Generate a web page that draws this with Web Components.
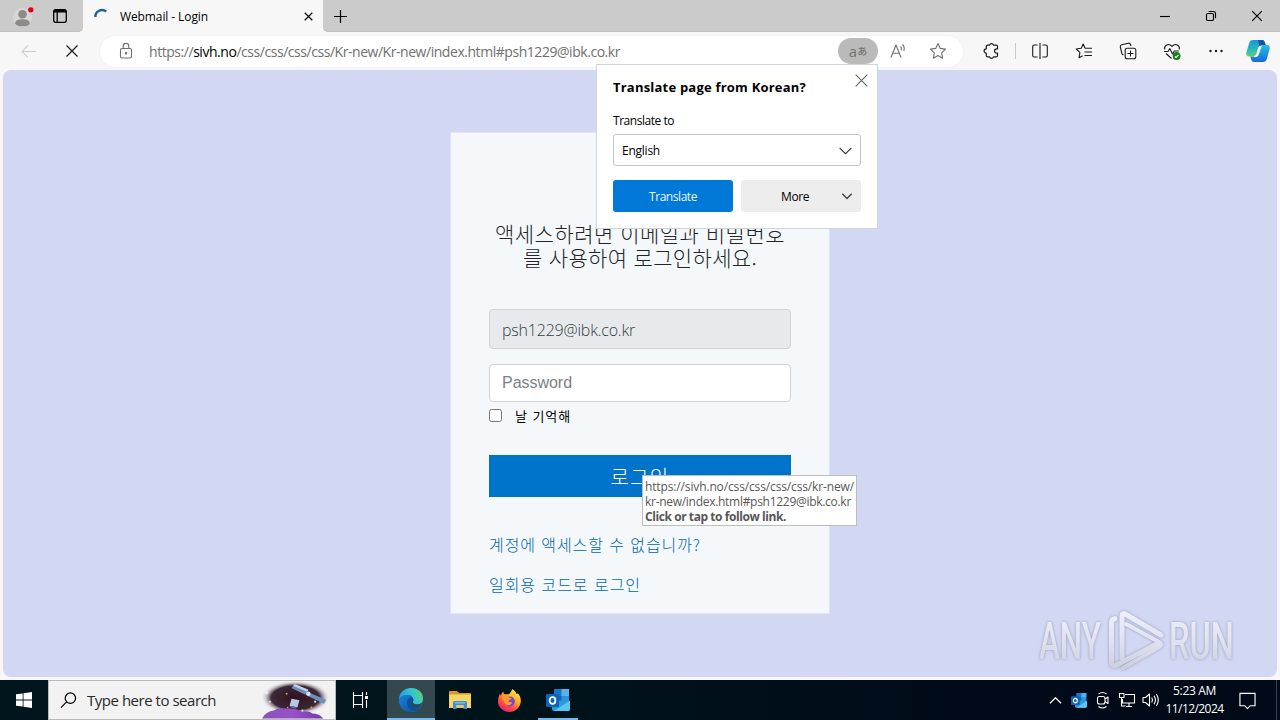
<!DOCTYPE html>
<html lang="ko">
<head>
<meta charset="utf-8">
<title>Webmail - Login</title>
<style>
  html, body { margin: 0; height: 100%; }
  body {
    width: 1280px;
    height: 720px;
    overflow: hidden;
    position: relative;
    display: flex;
    flex-direction: column;
    background: #f7f7f7;
    font-family: "Open Sans", "Noto Sans", "Noto Sans CJK KR", sans-serif;
    font-size: 12px;
    color: #000;
  }
</style>
</head>
<body>
  <tab-strip title-text="Webmail - Login"></tab-strip>
  <tool-bar></tool-bar>
  <page-view>
    <login-card email="psh1229@ibk.co.kr"></login-card>
  </page-view>
  <task-bar></task-bar>
  <translate-popup></translate-popup>
  <link-tip></link-tip>
  <any-mark></any-mark>

<script>
/**
 * Icon set. Every icon is a viewBox plus its markup,
 * strokes use currentColor unless they carry their own fill.
 */
const ICONS = {
  profile: ['0 0 24 24', `<circle cx="12" cy="12" r="12" fill="#d9d7d5" stroke="none"/>
    <circle cx="12" cy="7.800" r="5.400" fill="#8e8a88" stroke="none"/>
    <path d="M2.800 19.500c0-4 3.200-5.300 9.200-5.300s9.200 1.300 9.200 5.300c-1 2.500-4.500 3.700-9.200 3.700s-8.200-1.200-9.200-3.700z" fill="#8e8a88" stroke="none"/>
    <circle cx="22.500" cy="2.300" r="3.400" fill="#e3000f" stroke="none"/>`],
  tabs: ['0 0 16 16', `<rect x="1.700" y="1.700" width="12.600" height="12.600" rx="2"/><path d="M2 3.200h12" stroke-width="2.600"/><path d="M5.200 4v10"/>`],
  spinner: ['0 0 16 16', `<path d="M1.500 8.500A7 7 0 0 1 13 2.800" stroke="#1f6099" stroke-width="2.600"/>`],
  x: ['0 0 16 16', `<path d="M2.500 2.500l11 11M13.500 2.500l-11 11"/>`],
  plus: ['0 0 16 16', `<path d="M8 1v14M1 8h14"/>`],
  min: ['0 0 12 12', `<path d="M1 6.500h10"/>`],
  restore: ['0 0 12 12', `<rect x="1.500" y="3.500" width="7" height="7" rx="1.300"/><path d="M3.700 1.500h4.800a2 2 0 0 1 2 2v4.800"/>`],
  back: ['0 0 18 18', `<path d="M17 9H2M8.500 2.500L2 9l6.500 6.500"/>`],
  lock: ['0 0 16 18', `<rect x="2.500" y="6.500" width="11" height="9.500" rx="1.500"/><path d="M5.200 6.500V4.200a2.800 2.800 0 0 1 5.600 0v2.300"/><circle cx="8" cy="11.300" r=".7" fill="currentColor"/>`],
  read: ['0 0 18 18', `<path d="M2 15.500L7 3l5 12.500M3.800 11.300h6.400M11.500 4.500q1.400 1.500.7 4M13.500 2.500q2.600 2.600 1.300 6.500"/>`],
  star: ['0 0 18 18', `<path d="M9 1.500l2.300 4.900 5.200.7-3.800 3.700.9 5.400L9 13.600l-4.600 2.600.9-5.400L1.500 7.100l5.200-.7z"/>`],
  puzzle: ['0 0 18 18', `<path d="M5.500 3.200h2.100a2 2 0 0 1 3.900 0h2.800a1.200 1.200 0 0 1 1.200 1.200v2.400h-.8a2.200 2.200 0 0 0 0 4.400h.8v2.400a1.200 1.200 0 0 1-1.200 1.200h-2.800a2 2 0 0 1-3.900 0H5.500a1.200 1.200 0 0 1-1.200-1.200v-2.400a2.200 2.200 0 0 1 0-4.400V4.400a1.200 1.200 0 0 1 1.200-1.200z"/>`],
  split: ['0 0 18 18', `<path d="M9 1v16M6.500 3H3.200A1.500 1.500 0 0 0 1.700 4.500v9A1.500 1.500 0 0 0 3.200 15h3.300M11.500 3h3.300a1.500 1.500 0 0 1 1.500 1.500v9a1.500 1.500 0 0 1-1.500 1.500h-3.300"/>`],
  favs: ['0 0 18 18', `<path d="M10 6.300L8.200 2 6.200 6.300 1.200 7l3.700 3.400L4 15.800l3.500-2M10 6.300h7M9.500 10h7.500M9.500 13.500h7.500"/>`],
  collections: ['0 0 18 18', `<rect x="6.200" y="6.200" width="10.600" height="10.600" rx="2"/><path d="M11.500 8.500v6M8.500 11.500h6M4.500 13l-.8-.5a2 2 0 0 1-.9-1.200L1.300 5a2 2 0 0 1 1.400-2.300l6.500-1.500a2 2 0 0 1 2.300 1.300l.5 1.500"/>`],
  health: ['0 0 18 18', `<path d="M1.700 7.500C.8 3.500 5.500.5 9 4.300c3.500-3.800 8.200-.8 7.300 3.200M1 9.500h4l1.800-3 2.700 5.500 1.800-3h4.500M3 11.500l5.500 5"/>
    <circle cx="13.600" cy="14" r="3.900" fill="#177d1c" stroke="none"/><path d="M11.900 14.300l1.200 1.200 2.300-2.600" stroke="#fff"/>`],
  dots: ['0 0 18 18', `<g fill="currentColor" stroke="none"><circle cx="3.500" cy="9" r="1.200"/><circle cx="9" cy="9" r="1.200"/><circle cx="14.500" cy="9" r="1.200"/></g>`],
  copilot: ['0 0 24 24', `<defs>
      <linearGradient id="a" x1="0" y1="0" x2="0" y2="1"><stop offset="0" stop-color="#1797d8"/><stop offset=".55" stop-color="#28b7c0"/><stop offset="1" stop-color="#64cf6f"/></linearGradient>
      <linearGradient id="b" x1="0" y1="0" x2="0" y2="1"><stop offset="0" stop-color="#24bdec"/><stop offset="1" stop-color="#176bd9"/></linearGradient></defs>
    <g stroke="none"><path d="M7 1h9c2 0 2.500 1.500 3 3l.7 2h-3c-2 0-3 1-3.600 3L11 15c-.5 1.600-1.300 2.500-3 2.500H3c-2.500 0-3.200-2-2.500-4.500L3.200 4C3.800 2 5 1 7 1z" fill="url(#a)"/>
    <path d="M12 1h4c2 0 2.500 1.500 3 3l.7 2h-3c-1.500 0-2.500.6-3 1.700z" fill="#1554a5"/>
    <path d="M17 23H8c-2 0-2.500-1.500-3-3l-.7-2.500h3.500c2 0 3-1 3.400-2.600L13 9c.5-1.600 1.300-3 3.200-3H21c2.500 0 3.200 2 2.500 4.500L20.800 20c-.6 2-1.800 3-3.800 3z" fill="url(#b)"/>
    <path d="M13.800 7.500h1.400q-.7.700-1 2l-2 6q-.7 2-2.500 2H8.200q1.800-.3 2.600-2.300l1.700-5.500q.5-1.600 1.300-2.200z" fill="#f7f7f7" stroke="#f7f7f7"/></g>`],
  down: ['0 0 14 14', `<path d="M1.500 4.500L7 10l5.500-5.500"/>`],
  up: ['0 0 14 14', `<path d="M1 10l6-6 6 6"/>`],
  windows: ['0 0 16 16', `<path d="M0 2.300L6.700 1.400v6.200H0zM7.500 1.200L16 0v7.600H7.500zM0 8.400h6.700v6.200L0 13.700zM7.500 8.400H16V16l-8.500-1.200z" fill="#fff" stroke="none"/>`],
  search: ['0 0 18 18', `<circle cx="11" cy="6.500" r="5.500"/><path d="M7 10.500L1 16.500"/>`],
  space: ['0 0 72 38', `<defs><radialGradient id="s"><stop offset="0" stop-color="#30121c"/><stop offset=".7" stop-color="#3b2836"/><stop offset="1" stop-color="#efedef" stop-opacity="0"/></radialGradient>
      <linearGradient id="p" x1="0" x2="1"><stop offset="0" stop-color="#8456b5"/><stop offset=".5" stop-color="#9a50c8"/><stop offset="1" stop-color="#713aae"/></linearGradient></defs>
    <g stroke="none"><ellipse cx="37" cy="17" rx="35" ry="17.500" fill="url(#s)"/>
    <path d="M36 3l14 6-3 5-14-7zM51 12l17 7-2 4-17-8z" fill="#6f8fbb"/><path d="M36 3l14 6-1 2-14-6z" fill="#c3d4ea"/>
    <circle cx="50" cy="13" r="2.300" fill="#d5e2f3"/><path d="M33 18l8 1.500-2 7-8-1.500z" fill="#b7c9e6"/><path d="M31 25l8 1.500-2 1.500-5-1z" fill="#5f78a5"/>
    <path d="M3 38q4-7 12-8 4-3 11-2 12-1 17 3 8-1 11 2 7 0 11 5z" fill="url(#p)"/>
    <g fill="#f6ede7"><circle cx="8" cy="12" r="1.500"/><circle cx="11" cy="21" r="1"/><circle cx="57" cy="21" r="1.100"/><circle cx="44" cy="30" r="1"/></g>
    <g fill="#dc9e42"><circle cx="28" cy="13" r="1"/><circle cx="53" cy="27" r="1.100"/><circle cx="29" cy="27" r=".8"/></g></g>`],
  taskview: ['0 0 18 18', `<path d="M2.500 1v3.500h9V1M2.500 17v-3.500h9V17"/><path d="M2.500 5v8.500M11.500 5v8.500M15.500 1v3M15.500 9v8"/><path d="M14 6.500h3" stroke-width="3"/>`],
  edge: ['0 0 24 24', `<defs>
      <linearGradient id="e" x1="0" x2="1" y1=".3"><stop offset="0" stop-color="#2b9ee0"/><stop offset=".5" stop-color="#35c4d2"/><stop offset="1" stop-color="#62d957"/></linearGradient>
      <linearGradient id="f" x1="0" x2="1" y1="0" y2="1"><stop offset="0" stop-color="#1386d9"/><stop offset="1" stop-color="#13519e"/></linearGradient></defs>
    <g stroke="none"><circle cx="12" cy="12" r="12" fill="#1779cd"/>
    <path d="M0 12C0 5 5 0 12 0c7 0 12 4.500 12 10.500 0 4-3 6-6 6-2.500 0-4.500-1-4.500-2.200 0-.8 1-1.200 1-2.800C14.500 9 12 7 8.500 7 4 7 1 9 0 12z" fill="url(#e)"/>
    <path d="M0 12c1-3 4-5 8.500-5 2 0 4 .8 5 2-4 0-6 3-5.500 6.500C8.500 20 12 23 16 23.200c-1.300.5-2.700.8-4 .8C5 24 0 19 0 12z" fill="url(#f)"/>
    <path d="M8 15c0-3 1.500-5.500 4.500-5.700 2 1.200 2.300 3 1.300 4.400-.8 1.200 1 2.800 4.200 2.800 2 0 3.700-.6 4.700-1.600C21.500 20 18.500 23 16 23.200 12 23 8 20 8 15z" fill="#124f94"/>
    <path d="M14.300 13.200c-1.200 1.500.7 3.300 3.700 3.300 2.200 0 4-.7 5-2l-1 3c-2 1.600-5 2-7.300 1-2.700-1.200-3.200-4-.4-5.300z" fill="#33484f"/></g>`],
  explorer: ['0 0 22 20', `<g stroke="none"><path d="M0 2q0-1 1-1h7l2 2h11q1 0 1 1v14H0z" fill="#d99a22"/><path d="M0 4.500h22V17q0 1-1 1H1q-1 0-1-1z" fill="#f8d568"/>
    <path d="M4 19v-6q0-2 2-2h10q2 0 2 2v6h-3.500v-4h-7v4z" fill="#3d8fd1"/><path d="M7.500 15h7v3h-7z" fill="#e8c667"/><path d="M6 12h10v1.500H6z" fill="#75bdea"/></g>`],
  firefox: ['0 0 24 24', `<defs><linearGradient id="g" x1=".8" x2=".2" y1="0" y2="1"><stop offset="0" stop-color="#fff04a"/><stop offset=".38" stop-color="#ffae25"/><stop offset=".68" stop-color="#ff4b43"/><stop offset="1" stop-color="#dd1683"/></linearGradient></defs>
    <g stroke="none"><path d="M15 0c3 2 4 4 4.500 5.500l1.300-1C23 7 24 10 23.800 13 23.500 19 18 24 12 24S0 19.500 0 13c0-3.500 1.200-6 2-8l1 2c.5-2 1.500-3.500 2.700-4.500C5.500 4 6 5 7 5.500h4.500C12.500 4 14 2.500 15 0z" fill="url(#g)"/>
    <circle cx="12.300" cy="13" r="5.300" fill="#7448d7"/><path d="M4 8c3-2 6-1 8 1 2 0 2.500 1 2 1.500-1 1-2.500 1-3 1.500s.5 2 2 1.700c1.600-.3 2 1.300.5 2.300-3 2-7 .5-7.500-3.500C5.500 10.500 4 9.500 4 8z" fill="#ff9a2b"/></g>`],
  outlook: ['0 0 24 22', `<g stroke="none"><path d="M8 0h15v14H8z" fill="#1b74c5"/><path d="M15.500 0H23v7h-7.500z" fill="#51b4ee"/><path d="M8 7h7.500v7H8z" fill="#1164b3"/><path d="M15.500 7H23v7h-7.500z" fill="#2b93df"/>
    <path d="M6 11l18 1v8q0 2-2 2H8q-2 0-2-2z" fill="#2b99dc"/><path d="M24 11.500V20q0 2-2 2H8z" fill="#58c8ee"/><rect y="5" width="13" height="13" rx="1" fill="#0b63bc"/></g>
    <ellipse cx="6.500" cy="11.500" rx="2.900" ry="3.300" stroke="#fff" stroke-width="1.800"/>`],
  camera: ['0 0 18 18', `<rect x="3.500" y="5.500" width="7.500" height="7.500" rx="2"/><path d="M11 8l3-2v6.500l-3-2M4.500 3q4-3 8 0M4.500 15.500q4 3 8 0"/>`],
  network: ['0 0 18 18', `<path d="M7 3.500h9.500v8.500H4.500V8M8 15.500h6M11 12v3.500M1.500 2.500h4.500v4H1.500zM3.500 6.500V15h4"/>`],
  volume: ['0 0 18 18', `<path d="M1 6.500h2.500L7.500 3v12l-4-3.500H1zM9.700 6.500q1.600 2.500 0 5M12 4.700q2.900 4.300 0 8.600M14.300 3q4 6 0 12"/>`],
  notes: ['0 0 18 18', `<path d="M1 1.500h16v13h-5L9 17.500l-3-3H1z"/>`]
};

// <ui-icon name="star" size="18"> : centres one icon in its own box
class UiIcon extends HTMLElement {
  constructor() {
    super();
    this.attachShadow({ mode: 'open' });
  }

  connectedCallback() {
    const [box, body] = ICONS[this.getAttribute('name')];
    const size = this.getAttribute('size') || 18;
    const stroke = this.getAttribute('stroke') || 1.1;
    const [, , w, h] = box.split(' ').map(Number);
    this.shadowRoot.innerHTML = `
      <style>
        :host { display: flex; flex: none; align-items: center; justify-content: center; }
        svg { display: block; overflow: visible; }
      </style>
      <svg width="${size}" height="${size * h / w}" viewBox="${box}" fill="none"
        stroke="currentColor" stroke-width="${stroke}" stroke-linejoin="round">${body}</svg>
    `;
  }
}

// <fit-text width="100"> : tracks its slotted line out (or in) to a given width
class FitText extends HTMLElement {
  constructor() {
    super();
    this.attachShadow({ mode: 'open' });
    this.shadowRoot.innerHTML = `
      <style>
        :host { display: inline-block; white-space: nowrap; flex: none; text-align: left; }
        span { display: inline-block; }
      </style>
      <span><slot></slot></span>
    `;
  }

  connectedCallback() {
    const target = Number(this.getAttribute('width'));
    const span = this.shadowRoot.querySelector('span');
    const count = [...this.textContent].length;
    const natural = span.getBoundingClientRect().width;
    span.style.letterSpacing = `${(target - natural) / count}px`;
    this.style.width = `${target}px`;
  }
}

class TabStrip extends HTMLElement {
  connectedCallback() {
    this.attachShadow({ mode: 'open' }).innerHTML = `
      <style>
        :host { display: flex; height: 32px; flex: none; background: #f7f7f7; }
        .left, .right { display: flex; align-items: center; background: #cbcbcb; box-shadow: inset 0 -1px #c0c0c0; }
        .left { width: 83px; border-bottom-right-radius: 5px; }
        .left ui-icon:first-child { width: 44px; padding-top: 2px; }
        .left ui-icon:last-child { width: 32px; }
        .tab { display: flex; align-items: center; width: 240px; }
        .tab .spin { width: 37px; }
        .tab .close { width: 30px; margin-left: auto; }
        .right { flex: 1; border-bottom-left-radius: 5px; }
        .plus { width: 35px; }
        .win { display: flex; margin-left: auto; }
        .win ui-icon { width: 46px; }
      </style>
      <div class="left"><ui-icon name="profile" size="19"></ui-icon><ui-icon name="tabs" size="16" stroke="1.300"></ui-icon></div>
      <div class="tab">
        <ui-icon class="spin" name="spinner" size="15"></ui-icon>
        <fit-text width="88">${this.getAttribute('title-text')}</fit-text>
        <ui-icon class="close" name="x" size="11" stroke="1.700"></ui-icon>
      </div>
      <div class="right">
        <ui-icon class="plus" name="plus" size="15" stroke="1.300"></ui-icon>
        <div class="win"><ui-icon name="min" size="12"></ui-icon><ui-icon name="restore" size="12"></ui-icon><ui-icon name="x" size="14" stroke="1.300"></ui-icon></div>
      </div>
    `;
  }
}

class ToolBar extends HTMLElement {
  connectedCallback() {
    this.attachShadow({ mode: 'open' }).innerHTML = `
      <style>
        :host { display: flex; align-items: center; height: 38px; flex: none; padding-left: 6px; color: #1b1b1b; }
        ui-icon { width: 44px; }
        .back { color: #c9c9c9; }
        .pill {
          display: flex; align-items: center; box-sizing: border-box;
          width: 863px; height: 31px; margin: 0 6px; padding: 0 5px 0 4px;
          border-radius: 16px; background: #fff; color: #6f6f6f; font-size: 14px;
          box-shadow: 0 0 2px #e8e8e8;
        }
        .pill fit-text { margin-left: 1px; }
        b { font-weight: 400; color: #000; }
        .lang {
          display: flex; align-items: center; justify-content: center;
          width: 40px; height: 26px; margin-left: auto; border-radius: 13px;
          background: #bababa; color: #737373; font: 15px/24px "Open Sans", sans-serif;
        }
        .lang span { font: 500 10px/26px "Noto Sans CJK JP", sans-serif; }
        .pill .small { width: 40px; }
        hr { width: 1px; height: 16px; margin: 0 2px; border: 0; background: #c9c9c9; }
        .copilot { width: 40px; }
      </style>
      <ui-icon class="back" name="back" size="17"></ui-icon>
      <ui-icon name="x" size="16" stroke="1.200"></ui-icon>
      <div class="pill">
        <ui-icon name="lock" size="16"></ui-icon>
        <fit-text width="471">https://<b>sivh.no</b>/css/css/css/css/Kr-new/Kr-new/index.html#psh1229@ibk.co.kr</fit-text>
        <div class="lang">a<span>あ</span></div>
        <ui-icon class="small" name="read" size="18"></ui-icon>
        <ui-icon class="small" name="star" size="18"></ui-icon>
      </div>
      <ui-icon name="puzzle" size="18" stroke="1.200"></ui-icon>
      <hr>
      <ui-icon name="split" size="18" stroke="1.100"></ui-icon>
      <ui-icon name="favs" size="18" stroke="1.100"></ui-icon>
      <ui-icon name="collections" size="18" stroke="1.100"></ui-icon>
      <ui-icon name="health" size="18" stroke="1.100"></ui-icon>
      <ui-icon name="dots" size="18"></ui-icon>
      <ui-icon class="copilot" name="copilot" size="24"></ui-icon>
    `;
  }
}

class PageView extends HTMLElement {
  connectedCallback() {
    this.attachShadow({ mode: 'open' }).innerHTML = `
      <style>
        :host {
          display: flex; flex: 1; justify-content: center; align-items: flex-start;
          box-sizing: border-box; margin: 0 3px 3px; padding-top: 63px;
          border-radius: 8px; background: #d2d7f3;
        }
      </style>
      <slot></slot>
    `;
  }
}

class LoginCard extends HTMLElement {
  connectedCallback() {
    this.attachShadow({ mode: 'open' }).innerHTML = `
      <style>
        :host {
          display: flex; flex-direction: column; box-sizing: border-box;
          width: 378px; height: 480px; padding: 88px 38px 0;
          background: #f5f8fb; color: #212529; box-shadow: 0 0 0 1px rgba(245, 248, 251, .4);
          font-family: "Noto Sans CJK KR", "Open Sans", sans-serif; font-weight: 300;
        }
        h1 { display: flex; flex-direction: column; align-items: center; margin: 0 0 40px; font: inherit; font-size: 21px; line-height: 24px; }
        .field {
          display: flex; align-items: center; box-sizing: border-box; height: 38px;
          padding: 0 12px; border: 1px solid #ced4da; border-radius: 4px;
          background: #fff; font-size: 16px; line-height: 24px;
        }
        .mail { height: 40px; padding-top: 2px; margin-bottom: 15px; background: #e7eaed; color: #363c42; font-family: "Open Sans", sans-serif; }
        .pass { color: #7a8188; font-family: "Liberation Sans", sans-serif; }
        .remember { display: flex; align-items: center; height: 27px; font-size: 13px; font-weight: 400; color: #000; }
        .remember fit-text { margin-bottom: 1px; }
        .box { box-sizing: border-box; width: 13px; height: 13px; margin: 0 13px 0 0; border: 1px solid #767676; border-radius: 2.500px; background: #fff; }
        .go { display: flex; align-items: center; justify-content: center; height: 42px; margin: 26px 0 35px; background: #0074ca; color: #fff; font-size: 20px; }
        .link { height: 24px; margin-bottom: 16px; color: #0067b0; font-size: 16px; line-height: 24px; }
      </style>
      <h1>
        <fit-text width="290">액세스하려면 이메일과 비밀번호</fit-text>
        <fit-text width="234">를 사용하여 로그인하세요.</fit-text>
      </h1>
      <div class="field mail"><fit-text width="133">${this.getAttribute('email')}</fit-text></div>
      <div class="field pass"><fit-text width="70">Password</fit-text></div>
      <div class="remember"><span class="box"></span><fit-text width="56">날 기억해</fit-text></div>
      <div class="go"><fit-text width="59">로그인</fit-text></div>
      <div class="link"><fit-text width="212">계정에 액세스할 수 없습니까?</fit-text></div>
      <div class="link"><fit-text width="152">일회용 코드로 로그인</fit-text></div>
    `;
  }
}

class TranslatePopup extends HTMLElement {
  connectedCallback() {
    this.attachShadow({ mode: 'open' }).innerHTML = `
      <style>
        :host {
          display: block; position: absolute; left: 596px; top: 64px; box-sizing: border-box;
          width: 282px; height: 165px; padding: 0 16px; border: 1px solid #d0d4dc; background: #fff;
        }
        header { display: flex; height: 45px; font-size: 13px; font-weight: 700; }
        header fit-text { line-height: 44px; }
        header ui-icon { width: 24px; height: 30px; margin: 0 -12px 0 auto; color: #666; }
        .label { height: 24px; line-height: 21px; }
        .select, .btn { display: flex; align-items: center; box-sizing: border-box; height: 32px; border-radius: 3px; }
        .select { justify-content: space-between; padding: 0 7px 0 8px; border: 1px solid #c4c4c4; }
        .select ui-icon, .more ui-icon { color: #444; }
        .row { display: grid; grid-template-columns: 1fr 1fr; gap: 8px; margin-top: 14px; }
        .btn { justify-content: center; background: #ededed; }
        .blue { background: #0078d7; color: #e9f7ff; }
        .more { padding-left: 40px; justify-content: space-between; padding-right: 8px; }
      </style>
      <header><fit-text width="193">Translate page from Korean?</fit-text><ui-icon name="x" size="17"></ui-icon></header>
      <div class="label"><fit-text width="61">Translate to</fit-text></div>
      <div class="select"><fit-text width="38">English</fit-text><ui-icon name="down" size="15"></ui-icon></div>
      <div class="row">
        <div class="btn blue"><fit-text width="48">Translate</fit-text></div>
        <div class="btn more"><fit-text width="28">More</fit-text><ui-icon name="down" size="12" stroke="1.700"></ui-icon></div>
      </div>
    `;
  }
}

class LinkTip extends HTMLElement {
  connectedCallback() {
    this.attachShadow({ mode: 'open' }).innerHTML = `
      <style>
        :host {
          display: flex; flex-direction: column; position: absolute; left: 642px; top: 475px;
          box-sizing: border-box; width: 215px; height: 51px; padding: 3px 0 0 2px;
          border: 1px solid #bdbdbd; background: #fff; color: #575757; font-size: 12px; line-height: 15px;
        }
        .bold { font-weight: 700; }
      </style>
      <fit-text width="209">https://sivh.no/css/css/css/css/kr-new/</fit-text>
      <fit-text width="206">kr-new/index.html#psh1229@ibk.co.kr</fit-text>
      <fit-text class="bold" width="141">Click or tap to follow link.</fit-text>
    `;
  }
}

// Translucent corner watermark
class AnyMark extends HTMLElement {
  connectedCallback() {
    this.attachShadow({ mode: 'open' }).innerHTML = `
      <style>
        :host { display: block; position: absolute; left: 1036px; top: 606px; filter: drop-shadow(0 0 1.500px rgba(110, 115, 140, .6)); }
        svg { display: block; overflow: visible; }
        text { font: 500 52px Roboto, sans-serif; fill: url(#w); }
      </style>
      <svg width="200" height="70" viewBox="0 0 200 70" fill="none" stroke="url(#w)" stroke-width="5" stroke-linecap="round" stroke-linejoin="round">
        <defs><linearGradient id="w" gradientUnits="userSpaceOnUse" x1="0" x2="0" y1="8" y2="62"><stop offset="0" stop-color="#eceef9"/><stop offset=".55" stop-color="#dfe1ef"/><stop offset="1" stop-color="#cdcfdf"/></linearGradient></defs>
        <g stroke="none">
          <text x="3" y="53" textLength="62" lengthAdjust="spacingAndGlyphs">ANY</text>
          <text x="133" y="53" textLength="65" lengthAdjust="spacingAndGlyphs">RUN</text>
        </g>
        <path d="M79 12.500q-3.500 1-3.500 4v39q0 6 5 3.500L123 37"/>
        <path d="M86 52V10.500q0-4.500 4-2l35 20.500"/>
        <path d="M90 18l33 18q4 2.500 0 5L87 62" stroke-width="4"/>
      </svg>
    `;
  }
}

class TaskBar extends HTMLElement {
  connectedCallback() {
    this.attachShadow({ mode: 'open' }).innerHTML = `
      <style>
        :host { display: flex; flex: none; height: 40px; background: linear-gradient(90deg, #00151c, #00131b 45%, #000a18 75%); color: #fff; }
        .start { width: 48px; }
        .search {
          display: flex; align-items: center; box-sizing: border-box; width: 288px;
          border: 1px solid #b9b9b9; background: #f2f2f2; color: #2a2a2a; font-size: 15px;
        }
        .search .glass { width: 38px; color: #000; }
        .search .art { margin-left: auto; margin-right: 5px; }
        .apps { display: flex; gap: 1px; }
        .apps ui-icon { width: 48px; box-sizing: border-box; }
        .view { width: 48px; margin-right: 3px; }
        .active { background: #33484f; box-shadow: inset 0 -2px #76b9ed; }
        .run { background: linear-gradient(#76b9ed, #76b9ed) center bottom / 40px 2px no-repeat; }
        .tray { display: flex; margin-left: auto; }
        .tray ui-icon { width: 24px; }
        .clock { display: flex; flex-direction: column; align-items: center; width: 63px; padding-top: 2px; line-height: 18px; }
        .tray .notes { width: 42px; padding-right: 8px; }
        .peek { box-sizing: border-box; width: 4px; border-left: 1px solid #3b4152; }
      </style>
      <ui-icon class="start" name="windows" size="16"></ui-icon>
      <div class="search">
        <ui-icon class="glass" name="search" size="17" stroke="1.300"></ui-icon>
        <fit-text width="129">Type here to search</fit-text>
        <ui-icon class="art" name="space" size="71"></ui-icon>
      </div>
      <ui-icon class="view" name="taskview" size="18"></ui-icon>
      <div class="apps">
        <ui-icon class="active" name="edge" size="24"></ui-icon>
        <ui-icon name="explorer" size="22"></ui-icon>
        <ui-icon name="firefox" size="23"></ui-icon>
        <ui-icon class="run" name="outlook" size="24"></ui-icon>
      </div>
      <div class="tray">
        <ui-icon name="up" size="13" stroke="1.300"></ui-icon>
        <ui-icon name="outlook" size="16"></ui-icon>
        <ui-icon name="camera" size="18"></ui-icon>
        <ui-icon name="network" size="18"></ui-icon>
        <ui-icon name="volume" size="18"></ui-icon>
        <div class="clock"><fit-text width="43">5:23 AM</fit-text><fit-text width="58">11/12/2024</fit-text></div>
        <ui-icon class="notes" name="notes" size="17" stroke="1.200"></ui-icon>
        <div class="peek"></div>
      </div>
    `;
  }
}

customElements.define('ui-icon', UiIcon);
customElements.define('fit-text', FitText);
customElements.define('tab-strip', TabStrip);
customElements.define('tool-bar', ToolBar);
customElements.define('page-view', PageView);
customElements.define('login-card', LoginCard);
customElements.define('translate-popup', TranslatePopup);
customElements.define('link-tip', LinkTip);
customElements.define('any-mark', AnyMark);
customElements.define('task-bar', TaskBar);
</script>
</body>
</html>
